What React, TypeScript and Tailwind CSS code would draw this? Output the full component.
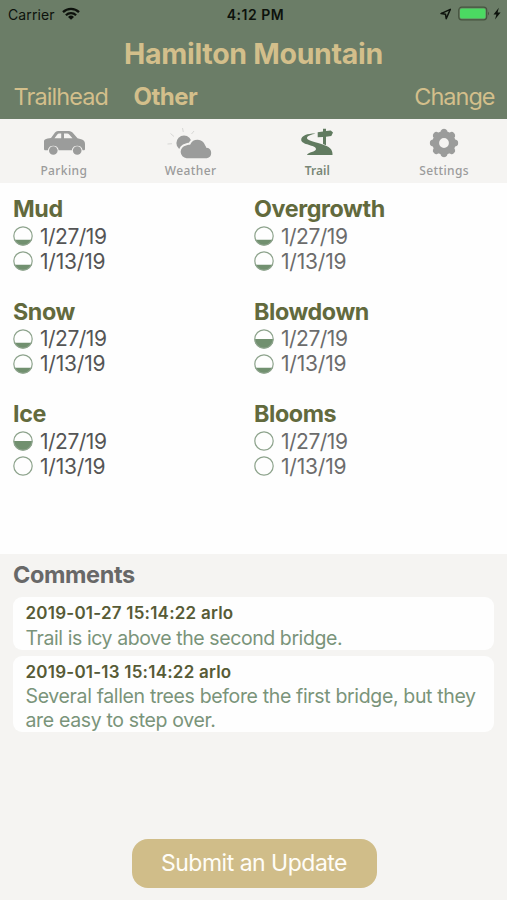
import React from "react";

const ROOT_FONT = "font-['Inter','Liberation_Sans',sans-serif]";

function Gauge({ id, level }: { id: string; level: number }) {
  const top = 19.5 - level * 19;
  return (
    <svg width="20" height="20" viewBox="0 0 20 20" className="shrink-0">
      <clipPath id={id}>
        <rect x="0" y={top} width="20" height="20" />
      </clipPath>
      {level > 0 && <circle cx="10" cy="10" r="9.5" fill="#71906f" clipPath={`url(#${id})`} />}
      <circle cx="10" cy="10" r="9.2" fill="none" stroke="#8da38c" strokeWidth="1.2" />
    </svg>
  );
}

type Item = { name: string; levels: [number, number] };

const left: Item[] = [
  { name: "Mud", levels: [0.3, 0.3] },
  { name: "Snow", levels: [0.3, 0.3] },
  { name: "Ice", levels: [0.5, 0] },
];
const right: Item[] = [
  { name: "Overgrowth", levels: [0.3, 0.3] },
  { name: "Blowdown", levels: [0.5, 0.3] },
  { name: "Blooms", levels: [0, 0] },
];

const dates = [
  { text: "1/27/19", tracking: "tracking-[-0.5px]" },
  { text: "1/13/19", tracking: "tracking-[-0.2px]" },
];

function Condition({ item, color }: { item: Item; color: string }) {
  return (
    <section className="h-[102.5px]">
      <h2 className="h-[29px] text-[23.3px] leading-[28px] font-bold tracking-[-0.4px] text-[#626a3d]">{item.name}</h2>
      {dates.map((date, i) => (
        <div key={date.text} className={`flex h-[24.75px] items-center gap-[7px] text-[21px] leading-[25px] ${date.tracking} ${color}`}>
          <Gauge id={`${item.name}-${i}`} level={item.levels[i]} />
          <span>{date.text}</span>
        </div>
      ))}
    </section>
  );
}

function CarIcon() {
  return (
    <svg width="43" height="26" viewBox="0 0 43 26" fill="#9b9c9b" className="ml-[2px]">
      <path fillRule="evenodd" d="M2 9.5C3 8.5 6 8.4 8 8L12 2.4Q13 .9 15 .9H26Q28 .9 29.5 2.4L34.5 8.2L39 9.5Q42 10.5 42 14V19Q42 20.3 41 20.3H39.6A5.5 5.5 0 0 0 28.8 20.3H15.7A5.5 5.5 0 0 0 4.9 20.3H2Q1 20.3 1 19V11Q1 10 2 9.5ZM11.5 8.3H18.2V3.5H16Q15 3.5 14.3 4.5ZM21 8.3H29.5L26.2 4.4Q25.5 3.5 24.2 3.5H21Z" />
      <circle cx="10.3" cy="20.5" r="4.3" />
      <circle cx="34.2" cy="20.5" r="4.3" />
    </svg>
  );
}

function WeatherIcon() {
  return (
    <svg width="48" height="34" viewBox="0 0 48 34" className="shrink-0">
      <path d="M16.5 2L17.3 6M4.5 7.5L8 10.5M1.5 18L6 17.7M28 5L25.5 8" stroke="#d8d8d6" strokeWidth="1" />
      <circle cx="18" cy="17" r="7.6" fill="#9b9c9b" />
      <path d="M20.5 33.2A7.4 7.4 0 0 1 20 18.5A4.8 4.8 0 0 1 23.5 17.7A8.9 8.9 0 0 1 39.8 18.5Q40.8 19.6 41 20.8A6.3 6.3 0 0 1 41 33.2Z" fill="#9b9c9b" stroke="#f5f4f2" strokeWidth="2" />
    </svg>
  );
}

function TrailIcon() {
  return (
    <svg width="34" height="28" viewBox="0 0 34 28" fill="#617b60" className="mb-[2px] ml-[1px]">
      <path d="M15.4 5.6C8 5.5 1.2 7.5 1.2 11.8C1.2 17 16 17 16 21C16 24 8 24 7 27H32.5C33 21 29 18.5 22 16.2C14 13.5 6.5 12.5 7 9.8C7.5 7.5 12 6.8 15.4 5.6Z" />
      <path d="M23 .8H26V3L30.8 2.4L33 4.5L31.3 8L26 8.7V17.2L23 16V9L17.7 9.3V4.2L23 3.4Z" />
    </svg>
  );
}

function GearIcon() {
  return (
    <svg width="30" height="30" viewBox="-15 -15 30 30" fill="#9b9c9b" className="mb-[1px]">
      <circle r="8.3" fill="none" stroke="#9b9c9b" strokeWidth="6.8" />
      {[0, 45, 90, 135, 180, 225, 270, 315].map((a) => (
        <path key={a} transform={`rotate(${a})`} d="M-4 -9.5L-3 -12.6Q-2.3 -14.2 0 -14.2Q2.3 -14.2 3 -12.6L4 -9.5Z" />
      ))}
    </svg>
  );
}

const tabs = [
  { label: "Parking", icon: <CarIcon />, active: false },
  { label: "Weather", icon: <WeatherIcon />, active: false },
  { label: "Trail", icon: <TrailIcon />, active: true },
  { label: "Settings", icon: <GearIcon />, active: false },
];

export default function App() {
  return (
    <div className={`flex h-[900px] w-[507px] flex-col overflow-hidden bg-[#fefefe] whitespace-nowrap ${ROOT_FONT}`}>
      <header className="flex h-[119px] shrink-0 flex-col bg-[#6b7d67] text-[#d3bf8b]">
        <div className="grid h-[28px] shrink-0 grid-cols-3 items-center text-[#0d120c]">
          <div className="flex items-center gap-[7px] pl-[8px] text-[14px]">
            <span className="tracking-[0.1px]">Carrier</span>
            <svg width="18" height="13" viewBox="0 0 18 13" fill="none" stroke="#0d120c" strokeWidth="2.3" className="mb-[2px]">
              <path d="M1 5.2A11.5 11.5 0 0 1 17 5.2M3.9 8.2A7.3 7.3 0 0 1 14.1 8.2" />
              <path d="M6 10A4.3 4.3 0 0 1 12 10L9 12.8Z" fill="#0d120c" stroke="none" />
            </svg>
          </div>
          <div className="pl-[4px] text-center text-[14px] font-semibold">
            <span className="tracking-[0.5px]">4:12 PM</span>
          </div>
          <div className="flex items-center justify-end pr-[5px]">
            <svg width="64" height="16" viewBox="0 0 64 16">
              <path d="M3 7.6L12.3 3.4L8.2 12.7L7.5 8.2Z" fill="none" stroke="#0d120c" strokeWidth="1.5" strokeLinejoin="round" />
              <rect x="20.7" y="1.2" width="28" height="12.6" rx="3" fill="none" stroke="#46543f" strokeWidth="1.2" />
              <rect x="22" y="2.5" width="25.5" height="10" rx="1.6" fill="#4bda62" />
              <path d="M50 5.5Q52 7.5 50 9.5Z" fill="#46543f" />
              <path d="M60.8 1.8L55.5 8.4H58.4L57 13.5L62.6 6.5H59.6Z" fill="#0d120c" />
            </svg>
          </div>
        </div>
        <h1 className="h-[52px] shrink-0 text-center text-[28.5px] leading-[52px] font-bold">
          <span className="tracking-[-0.3px]">Hamilton Mountain</span>
        </h1>
        <nav className="flex h-[34px] items-center pr-[12.5px] pl-[13.5px] text-[23.5px]">
          <span className="w-[120px] tracking-[-0.9px]">Trailhead</span>
          <span className="text-[24px] font-bold tracking-[-0.5px]">Other</span>
          <span className="ml-auto tracking-[-1px]">Change</span>
        </nav>
      </header>

      <nav className="grid h-[64px] shrink-0 grid-cols-4 bg-[#f5f4f2]">
        {tabs.map((t) => (
          <div key={t.label} className="flex flex-col items-center">
            <div className="flex h-[44px] items-center justify-center pt-[4px]">{t.icon}</div>
            <span className={`pl-[1px] font-['Noto_Sans',sans-serif] text-[12px] leading-[15px] tracking-[0.4px] ${t.active ? "font-semibold tracking-[0px] text-[#798777]" : "font-medium text-[#9b9b9b]"}`}>
              {t.label}
            </span>
          </div>
        ))}
      </nav>

      <main className="grid h-[371px] shrink-0 grid-cols-[241px_1fr] pt-[12px] pl-[13px]">
        <div>{left.map((c) => <Condition key={c.name} item={c} color="text-[#555555]" />)}</div>
        <div>{right.map((c) => <Condition key={c.name} item={c} color="text-[#6c6c6c]" />)}</div>
      </main>

      <section className="flex flex-1 flex-col bg-[#f5f4f2] px-[13px]">
        <h2 className="h-[43px] text-[23.5px] leading-[42px] font-bold tracking-[-0.4px] text-[#686868]">Comments</h2>
        <article className="h-[52.5px] rounded-[9px] bg-[#fefefe] pt-[4px] pl-[12.5px]">
          <h3 className="text-[17px] leading-[25px] font-semibold tracking-[0.22px] text-[#575b36]">2019-01-27 15:14:22 arlo</h3>
          <p className="text-[19.5px] leading-[24px] tracking-[-0.42px] text-[#7a947a]">Trail is icy above the second bridge.</p>
        </article>
        <article className="mt-[6.5px] h-[76px] rounded-[9px] bg-[#fefefe] pt-[4px] pl-[12.5px]">
          <h3 className="text-[17px] leading-[25px] font-semibold tracking-[0.22px] text-[#575b36]">2019-01-13 15:14:22 arlo</h3>
          <p className="text-[19.5px] leading-[23.5px] tracking-[-0.35px] text-[#7a947a]">
            Several fallen trees before the first bridge, but they
            <br />
            are easy to step over.
          </p>
        </article>
        <button className="mt-auto mb-[12px] ml-[1px] h-[49px] w-[245px] self-center rounded-[16px] bg-[#d0bd89] text-[23px] tracking-[-0.5px] text-[#fffdf8]">
          Submit an Update
        </button>
      </section>
    </div>
  );
}
